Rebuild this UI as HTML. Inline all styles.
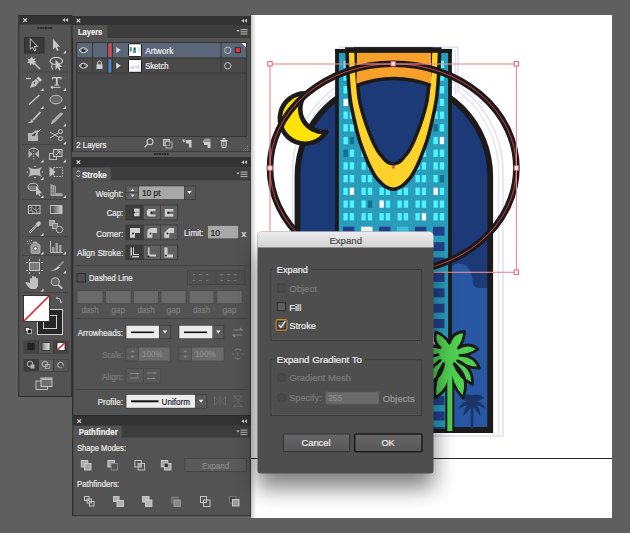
<!DOCTYPE html>
<html><head><meta charset="utf-8">
<style>
html,body{margin:0;padding:0}
body{width:630px;height:533px;background:#5f5f5f;position:relative;overflow:hidden;font-family:"Liberation Sans",sans-serif}
svg{position:absolute;left:0;top:0}
text{font-family:"Liberation Sans",sans-serif;transform:translate(0px,0.7px)}
</style></head>
<body>
<svg width="630" height="533" viewBox="0 0 630 533">
<!-- ARTBOARD -->
<defs>
<linearGradient id="abl" x1="0" x2="1"><stop offset="0" stop-color="#000" stop-opacity=".22"/><stop offset="1" stop-color="#000" stop-opacity="0"/></linearGradient>
<clipPath id="abclip"><rect x="251" y="15" width="361" height="503"/></clipPath>
<clipPath id="archclip"><path d="M300,432 V176 A94,94 0 0 1 488,176 V432Z"/></clipPath>
<clipPath id="towerclip"><rect x="339" y="52.5" width="109" height="376"/></clipPath>
</defs>
<rect x="251" y="15" width="361" height="503" fill="#fff"/>
<g id="art" clip-path="url(#abclip)">
<!-- sketch lavender lines -->
<g fill="none" stroke="#e0e0f6" stroke-width="1.5">
<path d="M339,47.2 H458 V92"/>
<path d="M455.5,50 V95"/>
<path d="M292.5,436 V172 A105.25,105.25 0 0 1 503,172 V436 H292.5"/>
<path d="M296.5,172 A101,101 0 0 1 498.5,172 V436" stroke="#e6e6f8"/>
</g>
<!-- navy arch -->
<path d="M297.5,430.7 V176 A96.5,96.5 0 0 1 490.5,176 V430.7Z" fill="#1d3a78"/>
<g clip-path="url(#archclip)">
<path d="M452,266 Q455,263 460,263.5 Q471,265 472.5,280 Q473,288 478,288 H490 V432 H452Z" fill="#2858a3"/>
</g>
<path d="M297.5,430 V176 A96.35,96.35 0 0 1 490.2,176 V430Z" fill="none" stroke="#1c1a1a" stroke-width="5.8"/>
<!-- moon -->
<path d="M306.4,93.3 A25.2,25.2 0 1 0 326.5,131.7 A23.0,23.0 0 0 1 306.4,93.3Z" fill="#ffe20a" stroke="#1c1a1a" stroke-width="4.6" stroke-linejoin="round"/>
<!-- tower -->
<rect x="337" y="50.8" width="113" height="379.5" fill="#2a9dbd" stroke="#1c1a1a" stroke-width="3.8"/>
<g clip-path="url(#towerclip)">
<g id="win" fill="#50f3ff">
<rect x="343.5" y="60.7" width="4.3" height="7.3"/>
<rect x="349.8" y="60.7" width="4.3" height="7.3"/>
<rect x="361.5" y="60.7" width="4.3" height="7.3"/>
<rect x="367.8" y="60.7" width="4.3" height="7.3"/>
<rect x="379.5" y="60.7" width="4.3" height="7.3"/>
<rect x="385.8" y="60.7" width="4.3" height="7.3"/>
<rect x="397.5" y="60.7" width="4.3" height="7.3"/>
<rect x="403.8" y="60.7" width="4.3" height="7.3"/>
<rect x="415.5" y="60.7" width="4.3" height="7.3"/>
<rect x="421.8" y="60.7" width="4.3" height="7.3"/>
<rect x="433.5" y="60.7" width="4.3" height="7.3"/>
<rect x="439.8" y="60.7" width="4.3" height="7.3"/>
<rect x="343.5" y="73.4" width="4.3" height="7.3"/>
<rect x="349.8" y="73.4" width="4.3" height="7.3"/>
<rect x="361.5" y="73.4" width="4.3" height="7.3"/>
<rect x="367.8" y="73.4" width="4.3" height="7.3"/>
<rect x="379.5" y="73.4" width="4.3" height="7.3"/>
<rect x="385.8" y="73.4" width="4.3" height="7.3"/>
<rect x="397.5" y="73.4" width="4.3" height="7.3"/>
<rect x="403.8" y="73.4" width="4.3" height="7.3"/>
<rect x="415.5" y="73.4" width="4.3" height="7.3"/>
<rect x="421.8" y="73.4" width="4.3" height="7.3"/>
<rect x="433.5" y="73.4" width="4.3" height="7.3"/>
<rect x="439.8" y="73.4" width="4.3" height="7.3"/>
<rect x="343.5" y="86.1" width="4.3" height="7.3"/>
<rect x="349.8" y="86.1" width="4.3" height="7.3"/>
<rect x="361.5" y="86.1" width="4.3" height="7.3"/>
<rect x="367.8" y="86.1" width="4.3" height="7.3"/>
<rect x="379.5" y="86.1" width="4.3" height="7.3"/>
<rect x="385.8" y="86.1" width="4.3" height="7.3"/>
<rect x="397.5" y="86.1" width="4.3" height="7.3"/>
<rect x="403.8" y="86.1" width="4.3" height="7.3"/>
<rect x="415.5" y="86.1" width="4.3" height="7.3"/>
<rect x="421.8" y="86.1" width="4.3" height="7.3"/>
<rect x="433.5" y="86.1" width="4.3" height="7.3"/>
<rect x="439.8" y="86.1" width="4.3" height="7.3"/>
<rect x="343.5" y="98.8" width="4.3" height="7.3" fill="#ffffff"/>
<rect x="349.8" y="98.8" width="4.3" height="7.3"/>
<rect x="361.5" y="98.8" width="4.3" height="7.3"/>
<rect x="367.8" y="98.8" width="4.3" height="7.3"/>
<rect x="379.5" y="98.8" width="4.3" height="7.3"/>
<rect x="385.8" y="98.8" width="4.3" height="7.3"/>
<rect x="397.5" y="98.8" width="4.3" height="7.3"/>
<rect x="403.8" y="98.8" width="4.3" height="7.3"/>
<rect x="415.5" y="98.8" width="4.3" height="7.3"/>
<rect x="421.8" y="98.8" width="4.3" height="7.3"/>
<rect x="433.5" y="98.8" width="4.3" height="7.3"/>
<rect x="439.8" y="98.8" width="4.3" height="7.3"/>
<rect x="343.5" y="111.5" width="4.3" height="7.3"/>
<rect x="349.8" y="111.5" width="4.3" height="7.3"/>
<rect x="361.5" y="111.5" width="4.3" height="7.3"/>
<rect x="367.8" y="111.5" width="4.3" height="7.3"/>
<rect x="379.5" y="111.5" width="4.3" height="7.3"/>
<rect x="385.8" y="111.5" width="4.3" height="7.3"/>
<rect x="397.5" y="111.5" width="4.3" height="7.3"/>
<rect x="403.8" y="111.5" width="4.3" height="7.3"/>
<rect x="415.5" y="111.5" width="4.3" height="7.3"/>
<rect x="421.8" y="111.5" width="4.3" height="7.3"/>
<rect x="433.5" y="111.5" width="4.3" height="7.3"/>
<rect x="439.8" y="111.5" width="4.3" height="7.3"/>
<rect x="343.5" y="124.2" width="4.3" height="7.3"/>
<rect x="349.8" y="124.2" width="4.3" height="7.3"/>
<rect x="361.5" y="124.2" width="4.3" height="7.3"/>
<rect x="367.8" y="124.2" width="4.3" height="7.3"/>
<rect x="379.5" y="124.2" width="4.3" height="7.3"/>
<rect x="385.8" y="124.2" width="4.3" height="7.3"/>
<rect x="397.5" y="124.2" width="4.3" height="7.3"/>
<rect x="403.8" y="124.2" width="4.3" height="7.3"/>
<rect x="415.5" y="124.2" width="4.3" height="7.3"/>
<rect x="421.8" y="124.2" width="4.3" height="7.3"/>
<rect x="433.5" y="124.2" width="4.3" height="7.3" fill="#166f8e"/>
<rect x="439.8" y="124.2" width="4.3" height="7.3"/>
<rect x="343.5" y="136.9" width="4.3" height="7.3"/>
<rect x="349.8" y="136.9" width="4.3" height="7.3" fill="#166f8e"/>
<rect x="361.5" y="136.9" width="4.3" height="7.3"/>
<rect x="367.8" y="136.9" width="4.3" height="7.3"/>
<rect x="379.5" y="136.9" width="4.3" height="7.3"/>
<rect x="385.8" y="136.9" width="4.3" height="7.3"/>
<rect x="397.5" y="136.9" width="4.3" height="7.3"/>
<rect x="403.8" y="136.9" width="4.3" height="7.3"/>
<rect x="415.5" y="136.9" width="4.3" height="7.3"/>
<rect x="421.8" y="136.9" width="4.3" height="7.3"/>
<rect x="433.5" y="136.9" width="4.3" height="7.3"/>
<rect x="439.8" y="136.9" width="4.3" height="7.3" fill="#ffffff"/>
<rect x="343.5" y="149.6" width="4.3" height="7.3" fill="#166f8e"/>
<rect x="349.8" y="149.6" width="4.3" height="7.3"/>
<rect x="361.5" y="149.6" width="4.3" height="7.3"/>
<rect x="367.8" y="149.6" width="4.3" height="7.3"/>
<rect x="379.5" y="149.6" width="4.3" height="7.3"/>
<rect x="385.8" y="149.6" width="4.3" height="7.3"/>
<rect x="397.5" y="149.6" width="4.3" height="7.3"/>
<rect x="403.8" y="149.6" width="4.3" height="7.3"/>
<rect x="415.5" y="149.6" width="4.3" height="7.3"/>
<rect x="421.8" y="149.6" width="4.3" height="7.3"/>
<rect x="433.5" y="149.6" width="4.3" height="7.3"/>
<rect x="439.8" y="149.6" width="4.3" height="7.3"/>
<rect x="343.5" y="162.3" width="4.3" height="7.3"/>
<rect x="349.8" y="162.3" width="4.3" height="7.3"/>
<rect x="361.5" y="162.3" width="4.3" height="7.3"/>
<rect x="367.8" y="162.3" width="4.3" height="7.3"/>
<rect x="379.5" y="162.3" width="4.3" height="7.3"/>
<rect x="385.8" y="162.3" width="4.3" height="7.3"/>
<rect x="397.5" y="162.3" width="4.3" height="7.3"/>
<rect x="403.8" y="162.3" width="4.3" height="7.3"/>
<rect x="415.5" y="162.3" width="4.3" height="7.3"/>
<rect x="421.8" y="162.3" width="4.3" height="7.3"/>
<rect x="433.5" y="162.3" width="4.3" height="7.3"/>
<rect x="439.8" y="162.3" width="4.3" height="7.3"/>
<rect x="343.5" y="175.0" width="4.3" height="7.3"/>
<rect x="349.8" y="175.0" width="4.3" height="7.3"/>
<rect x="361.5" y="175.0" width="4.3" height="7.3"/>
<rect x="367.8" y="175.0" width="4.3" height="7.3"/>
<rect x="379.5" y="175.0" width="4.3" height="7.3"/>
<rect x="385.8" y="175.0" width="4.3" height="7.3"/>
<rect x="397.5" y="175.0" width="4.3" height="7.3"/>
<rect x="403.8" y="175.0" width="4.3" height="7.3"/>
<rect x="415.5" y="175.0" width="4.3" height="7.3"/>
<rect x="421.8" y="175.0" width="4.3" height="7.3"/>
<rect x="433.5" y="175.0" width="4.3" height="7.3"/>
<rect x="439.8" y="175.0" width="4.3" height="7.3" fill="#166f8e"/>
<rect x="343.5" y="187.7" width="4.3" height="7.3"/>
<rect x="349.8" y="187.7" width="4.3" height="7.3" fill="#ffffff"/>
<rect x="361.5" y="187.7" width="4.3" height="7.3"/>
<rect x="367.8" y="187.7" width="4.3" height="7.3"/>
<rect x="379.5" y="187.7" width="4.3" height="7.3"/>
<rect x="385.8" y="187.7" width="4.3" height="7.3"/>
<rect x="397.5" y="187.7" width="4.3" height="7.3"/>
<rect x="403.8" y="187.7" width="4.3" height="7.3"/>
<rect x="415.5" y="187.7" width="4.3" height="7.3"/>
<rect x="421.8" y="187.7" width="4.3" height="7.3"/>
<rect x="433.5" y="187.7" width="4.3" height="7.3" fill="#ffffff"/>
<rect x="439.8" y="187.7" width="4.3" height="7.3"/>
<rect x="343.5" y="200.4" width="4.3" height="7.3"/>
<rect x="349.8" y="200.4" width="4.3" height="7.3"/>
<rect x="361.5" y="200.4" width="4.3" height="7.3"/>
<rect x="367.8" y="200.4" width="4.3" height="7.3" fill="#166f8e"/>
<rect x="379.5" y="200.4" width="4.3" height="7.3" fill="#ffffff"/>
<rect x="385.8" y="200.4" width="4.3" height="7.3"/>
<rect x="397.5" y="200.4" width="4.3" height="7.3"/>
<rect x="403.8" y="200.4" width="4.3" height="7.3"/>
<rect x="415.5" y="200.4" width="4.3" height="7.3"/>
<rect x="421.8" y="200.4" width="4.3" height="7.3"/>
<rect x="433.5" y="200.4" width="4.3" height="7.3"/>
<rect x="439.8" y="200.4" width="4.3" height="7.3"/>
<rect x="343.5" y="213.1" width="4.3" height="7.3"/>
<rect x="349.8" y="213.1" width="4.3" height="7.3"/>
<rect x="361.5" y="213.1" width="4.3" height="7.3"/>
<rect x="367.8" y="213.1" width="4.3" height="7.3"/>
<rect x="379.5" y="213.1" width="4.3" height="7.3"/>
<rect x="385.8" y="213.1" width="4.3" height="7.3"/>
<rect x="397.5" y="213.1" width="4.3" height="7.3"/>
<rect x="403.8" y="213.1" width="4.3" height="7.3"/>
<rect x="415.5" y="213.1" width="4.3" height="7.3"/>
<rect x="421.8" y="213.1" width="4.3" height="7.3" fill="#ffffff"/>
<rect x="433.5" y="213.1" width="4.3" height="7.3"/>
<rect x="439.8" y="213.1" width="4.3" height="7.3"/>
<rect x="343.0" y="226.7" width="11.5" height="9" fill="#22408a"/>
<rect x="361.0" y="226.7" width="11.5" height="9" fill="#f4f4f4"/>
<rect x="379.0" y="226.7" width="11.5" height="9" fill="#22408a"/>
<rect x="397.0" y="226.7" width="11.5" height="9" fill="#3cc0dd"/>
<rect x="415.0" y="226.7" width="11.5" height="9" fill="#22408a"/>
<rect x="433.0" y="226.7" width="11.5" height="9" fill="#22408a"/>
<rect x="343.0" y="242.1" width="11.5" height="9" fill="#22408a"/>
<rect x="361.0" y="242.1" width="11.5" height="9" fill="#22408a"/>
<rect x="379.0" y="242.1" width="11.5" height="9" fill="#22408a"/>
<rect x="397.0" y="242.1" width="11.5" height="9" fill="#22408a"/>
<rect x="415.0" y="242.1" width="11.5" height="9" fill="#22408a"/>
<rect x="433.0" y="242.1" width="11.5" height="9" fill="#22408a"/>
<rect x="343.0" y="257.5" width="11.5" height="9" fill="#22408a"/>
<rect x="361.0" y="257.5" width="11.5" height="9" fill="#22408a"/>
<rect x="379.0" y="257.5" width="11.5" height="9" fill="#22408a"/>
<rect x="397.0" y="257.5" width="11.5" height="9" fill="#22408a"/>
<rect x="415.0" y="257.5" width="11.5" height="9" fill="#22408a"/>
<rect x="433.0" y="257.5" width="11.5" height="9" fill="#22408a"/>
<rect x="343.0" y="272.9" width="11.5" height="9" fill="#22408a"/>
<rect x="361.0" y="272.9" width="11.5" height="9" fill="#22408a"/>
<rect x="379.0" y="272.9" width="11.5" height="9" fill="#22408a"/>
<rect x="397.0" y="272.9" width="11.5" height="9" fill="#22408a"/>
<rect x="415.0" y="272.9" width="11.5" height="9" fill="#22408a"/>
<rect x="433.0" y="272.9" width="11.5" height="9" fill="#22408a"/>
<rect x="343.0" y="288.3" width="11.5" height="9" fill="#22408a"/>
<rect x="361.0" y="288.3" width="11.5" height="9" fill="#22408a"/>
<rect x="379.0" y="288.3" width="11.5" height="9" fill="#22408a"/>
<rect x="397.0" y="288.3" width="11.5" height="9" fill="#22408a"/>
<rect x="415.0" y="288.3" width="11.5" height="9" fill="#22408a"/>
<rect x="433.0" y="288.3" width="11.5" height="9" fill="#22408a"/>
<rect x="343.0" y="303.7" width="11.5" height="9" fill="#22408a"/>
<rect x="361.0" y="303.7" width="11.5" height="9" fill="#22408a"/>
<rect x="379.0" y="303.7" width="11.5" height="9" fill="#22408a"/>
<rect x="397.0" y="303.7" width="11.5" height="9" fill="#22408a"/>
<rect x="415.0" y="303.7" width="11.5" height="9" fill="#22408a"/>
<rect x="433.0" y="303.7" width="11.5" height="9" fill="#22408a"/>
<rect x="343.0" y="319.1" width="11.5" height="9" fill="#22408a"/>
<rect x="361.0" y="319.1" width="11.5" height="9" fill="#22408a"/>
<rect x="379.0" y="319.1" width="11.5" height="9" fill="#22408a"/>
<rect x="397.0" y="319.1" width="11.5" height="9" fill="#22408a"/>
<rect x="415.0" y="319.1" width="11.5" height="9" fill="#22408a"/>
<rect x="433.0" y="319.1" width="11.5" height="9" fill="#22408a"/>
<rect x="343.0" y="334.5" width="11.5" height="9" fill="#22408a"/>
<rect x="361.0" y="334.5" width="11.5" height="9" fill="#22408a"/>
<rect x="379.0" y="334.5" width="11.5" height="9" fill="#22408a"/>
<rect x="397.0" y="334.5" width="11.5" height="9" fill="#22408a"/>
<rect x="415.0" y="334.5" width="11.5" height="9" fill="#22408a"/>
<rect x="433.0" y="334.5" width="11.5" height="9" fill="#ffffff"/>
<rect x="343.0" y="349.9" width="11.5" height="9" fill="#22408a"/>
<rect x="361.0" y="349.9" width="11.5" height="9" fill="#22408a"/>
<rect x="379.0" y="349.9" width="11.5" height="9" fill="#22408a"/>
<rect x="397.0" y="349.9" width="11.5" height="9" fill="#22408a"/>
<rect x="415.0" y="349.9" width="11.5" height="9" fill="#22408a"/>
<rect x="433.0" y="349.9" width="11.5" height="9" fill="#22408a"/>
<rect x="343.0" y="365.3" width="11.5" height="9" fill="#22408a"/>
<rect x="361.0" y="365.3" width="11.5" height="9" fill="#22408a"/>
<rect x="379.0" y="365.3" width="11.5" height="9" fill="#22408a"/>
<rect x="397.0" y="365.3" width="11.5" height="9" fill="#22408a"/>
<rect x="415.0" y="365.3" width="11.5" height="9" fill="#22408a"/>
<rect x="433.0" y="365.3" width="11.5" height="9" fill="#22408a"/>
<rect x="343.0" y="380.7" width="11.5" height="9" fill="#22408a"/>
<rect x="361.0" y="380.7" width="11.5" height="9" fill="#22408a"/>
<rect x="379.0" y="380.7" width="11.5" height="9" fill="#22408a"/>
<rect x="397.0" y="380.7" width="11.5" height="9" fill="#22408a"/>
<rect x="415.0" y="380.7" width="11.5" height="9" fill="#22408a"/>
<rect x="433.0" y="380.7" width="11.5" height="9" fill="#22408a"/>
<rect x="343.0" y="396.1" width="11.5" height="9" fill="#22408a"/>
<rect x="361.0" y="396.1" width="11.5" height="9" fill="#22408a"/>
<rect x="379.0" y="396.1" width="11.5" height="9" fill="#22408a"/>
<rect x="397.0" y="396.1" width="11.5" height="9" fill="#22408a"/>
<rect x="415.0" y="396.1" width="11.5" height="9" fill="#22408a"/>
<rect x="433.0" y="396.1" width="11.5" height="9" fill="#22408a"/>
<rect x="343.0" y="411.5" width="11.5" height="9" fill="#22408a"/>
<rect x="361.0" y="411.5" width="11.5" height="9" fill="#22408a"/>
<rect x="379.0" y="411.5" width="11.5" height="9" fill="#22408a"/>
<rect x="397.0" y="411.5" width="11.5" height="9" fill="#22408a"/>
<rect x="415.0" y="411.5" width="11.5" height="9" fill="#22408a"/>
<rect x="433.0" y="411.5" width="11.5" height="9" fill="#22408a"/>
<rect x="343.0" y="426.9" width="11.5" height="9" fill="#22408a"/>
<rect x="361.0" y="426.9" width="11.5" height="9" fill="#22408a"/>
<rect x="379.0" y="426.9" width="11.5" height="9" fill="#22408a"/>
<rect x="397.0" y="426.9" width="11.5" height="9" fill="#22408a"/>
<rect x="415.0" y="426.9" width="11.5" height="9" fill="#22408a"/>
<rect x="433.0" y="426.9" width="11.5" height="9" fill="#22408a"/>
</g>
</g>
<!-- palms -->
<path d="M472,428.5 V403" stroke="#1a3466" stroke-width="2.8"/>
<path d="M472,395 Q480.5,393 484,398 Q480.5,399.5 477.5,401.5 Q483.5,403 485.5,409 Q480.5,406 476.5,405 Q480.5,410 480.5,416 Q476,410.5 472.5,406 Q468,410.5 463.5,416 Q463.5,410 467.5,405 Q463.5,406 458.5,409 Q460.5,403 466.5,401.5 Q463.5,399.5 460,398 Q463.5,393 472,395Z" fill="#1a3466"/>
<path d="M449.8,430.5 V355" stroke="#1c1a1a" stroke-width="9"/>
<path d="M440.1,347.6 Q432.4,341.3 436.0,332.0 Q444.7,335.1 449.4,343.0 Q452.8,331.8 464.5,331.5 Q464.4,340.9 458.3,348.1 Q468.5,341.4 478.0,349.0 Q470.1,355.5 459.9,355.4 Q474.2,354.7 479.5,368.0 Q467.3,368.4 457.6,360.9 Q473.6,367.3 472.5,384.5 Q459.6,377.4 454.1,363.7 Q470.9,377.7 463.0,398.0 Q450.1,384.0 449.0,365.0 Q453.9,386.5 435.0,398.0 Q433.2,379.3 443.7,363.6 Q441.2,380.9 424.0,384.0 Q427.8,369.3 440.1,360.4 Q431.0,371.2 418.0,366.0 Q426.0,356.8 438.0,354.9 Q426.5,357.9 420.0,348.0 Q430.0,344.2 440.1,347.6Z" fill="#50cf50" stroke="#1c1a1a" stroke-width="2.8" stroke-linejoin="round"/>
<path d="M449.8,431 V356" stroke="#50cf50" stroke-width="5"/>
<!-- U arch -->
<path id="uo" d="M347.0,49.0 C347.2,53.3 347.4,66.5 348.0,75.0 C348.6,83.5 349.2,92.5 350.3,100.0 C351.4,107.5 352.8,113.3 354.3,120.0 C355.8,126.7 357.3,133.3 359.4,140.0 C361.5,146.7 364.9,155.0 366.9,160.0 C368.9,165.0 370.1,167.2 371.6,170.0 C373.1,172.8 374.2,174.9 375.8,177.1 C377.4,179.3 379.4,181.3 381.1,183.0 C382.8,184.7 384.1,185.9 386.1,187.0 C388.1,188.1 390.9,189.3 393.3,189.3 C395.7,189.3 398.5,188.1 400.5,187.0 C402.5,185.9 403.8,184.7 405.5,183.0 C407.2,181.3 409.2,179.3 410.8,177.1 C412.4,174.9 413.5,172.8 415.0,170.0 C416.5,167.2 417.7,165.0 419.7,160.0 C421.7,155.0 425.1,146.7 427.2,140.0 C429.3,133.3 430.8,126.7 432.3,120.0 C433.8,113.3 435.2,107.5 436.3,100.0 C437.4,92.5 438.1,83.5 438.6,75.0 C439.2,66.5 439.4,53.3 439.6,49.0Z" fill="#fdd22a" stroke="#1c1a1a" stroke-width="3.6"/>
<path id="ui" d="M356.0,49.0 C356.2,53.3 356.5,66.5 357.1,75.0 C357.7,83.5 358.2,92.5 359.5,100.0 C360.8,107.5 362.7,113.3 364.8,120.0 C366.9,126.7 370.2,135.0 372.3,140.0 C374.4,145.0 375.8,147.4 377.3,150.0 C378.8,152.6 380.2,154.0 381.5,155.7 C382.8,157.4 383.9,158.8 385.1,160.0 C386.3,161.2 387.1,161.9 388.5,162.6 C389.9,163.2 391.7,163.9 393.3,163.9 C394.9,163.9 396.7,163.2 398.1,162.6 C399.5,161.9 400.3,161.2 401.5,160.0 C402.7,158.8 403.8,157.4 405.1,155.7 C406.4,154.0 407.8,152.6 409.3,150.0 C410.8,147.4 412.2,145.0 414.3,140.0 C416.4,135.0 419.7,126.7 421.8,120.0 C423.9,113.3 425.8,107.5 427.1,100.0 C428.4,92.5 428.9,83.5 429.5,75.0 C430.1,66.5 430.4,53.3 430.6,49.0Z" fill="#1d3a78" stroke="#1c1a1a" stroke-width="3.6"/>
<path d="M357,52.5 H431 L431,85 Q394,71.5 356.5,85Z" fill="#f7a02a"/>
<path d="M356.8,85.5 Q394,71.5 430.8,85.5" fill="none" stroke="#1c1a1a" stroke-width="3.6"/>
<rect x="335.1" y="49" width="117" height="3.8" fill="#1c1a1a"/>
<!-- selected ellipse -->
<ellipse cx="393.2" cy="168" rx="123.2" ry="104.2" fill="none" stroke="#1c1a1a" stroke-width="6.6"/>
<ellipse cx="393.2" cy="168" rx="123.2" ry="104.2" fill="none" stroke="#e04448" stroke-width="0.9"/>
<rect x="270" y="64" width="246.4" height="208.3" fill="none" stroke="#f08a8e" stroke-width="1.1"/>
<g fill="#fff" stroke="#ef5a60" stroke-width="1">
<rect x="267.8" y="61.6" width="4.4" height="4.4"/>
<rect x="391.0" y="61.6" width="4.4" height="4.4"/>
<rect x="514.2" y="61.6" width="4.4" height="4.4"/>
<rect x="267.8" y="165.8" width="4.4" height="4.4"/>
<rect x="514.2" y="165.8" width="4.4" height="4.4"/>
<rect x="267.8" y="270.0" width="4.4" height="4.4"/>
<rect x="391.0" y="270.0" width="4.4" height="4.4"/>
<rect x="514.2" y="270.0" width="4.4" height="4.4"/>
</g>
<rect x="392.2" y="166" width="2.6" height="2.6" fill="#f0505a"/>
</g>
<rect x="251" y="458" width="361" height="1" fill="#2a2a2a"/>
<rect x="251" y="15" width="5" height="503" fill="url(#abl)"/>

<!-- ===== TOOLS PANEL ===== -->
<g id="tools">
<rect x="18.8" y="15.5" width="52.9" height="381" fill="#535353" stroke="#2c2c2c"/>
<rect x="19" y="16" width="53" height="8.5" fill="#333"/>
<path d="M23.3,18.3 l3.6,3.6 M26.9,18.3 l-3.6,3.6" stroke="#ddd" stroke-width="1.1"/>
<path d="M65,18 l-2.6,2 l2.6,2Z M68,18 l-2.6,2 l2.6,2Z" fill="#ccc"/>
<!-- grip -->
<g fill="#2c2c2c"><rect x="37.5" y="27" width="2" height="2"/><rect x="40" y="27" width="2" height="2"/><rect x="42.5" y="27" width="2" height="2"/><rect x="45" y="27" width="2" height="2"/><rect x="47.5" y="27" width="2" height="2"/><rect x="50" y="27" width="2" height="2"/></g>
<!-- separators -->
<g fill="#444">
<rect x="23" y="71.5" width="45" height="1"/>
<rect x="23" y="144" width="45" height="1"/>
<rect x="23" y="199" width="45" height="1"/>
<rect x="23" y="236" width="45" height="1"/>
<rect x="23" y="255" width="45" height="1"/>
<rect x="23" y="292" width="45" height="1"/>
</g>
<!-- selection highlight -->
<rect x="24.5" y="37.5" width="19.5" height="15.5" fill="#3a3a3a" stroke="#2e2e2e"/>
<!-- selection arrow outlined -->
<path d="M30.3,38.6 V49.3 l2.3,-2.2 l1.8,3.8 l1.6,-0.8 l-1.8,-3.6 h3.3Z" fill="#2a2a2a" stroke="#cfcfcf" stroke-width="0.9" stroke-linejoin="round"/>
<!-- direct select -->
<path d="M53,39 V49.5 l2.3,-2.2 l1.8,3.8 l1.6,-0.8 l-1.8,-3.6 h3.3Z" fill="#c8c8c8"/>
<g fill="#d8d8d8">
<path d="M66,50.5 v3 h-3Z"/>
<path d="M43.5,88 v3 h-3Z"/><path d="M66,88 v3 h-3Z"/>
<path d="M43.5,106 v3 h-3Z"/><path d="M66,106 v3 h-3Z"/>
<path d="M66,123.5 v3 h-3Z"/>
<path d="M66,141.5 v3 h-3Z"/>
<path d="M43.5,159.5 v3 h-3Z"/><path d="M66,159.5 v3 h-3Z"/>
<path d="M43.5,177 v3 h-3Z"/>
<path d="M43.5,195 v3 h-3Z"/><path d="M66,195 v3 h-3Z"/>
<path d="M43.5,233 v3 h-3Z"/>
<path d="M43.5,251.5 v3 h-3Z"/><path d="M66,251.5 v3 h-3Z"/>
<path d="M66,270.5 v3 h-3Z"/>
<path d="M43.5,288.5 v3 h-3Z"/>
</g>
<!-- magic wand -->
<path d="M32,56.5 l1,2.6 2.7,-0.8 -1.3,2.4 2.3,1.5 -2.7,0.5 0.3,2.7 -2.3,-1.6 -1.9,2 -0.4,-2.7 -2.8,-0.2 1.9,-2 -1.6,-2.2 2.7,0.4Z" fill="#c4c4c4"/>
<path d="M34,63 l6,6" stroke="#c4c4c4" stroke-width="1.6"/>
<!-- lasso -->
<ellipse cx="56.3" cy="61" rx="6.3" ry="3.6" fill="none" stroke="#c4c4c4" stroke-width="1.2"/>
<path d="M55.5,59.5 V69.5 l2.2,-2 l1.6,3 l1.4,-0.7 l-1.5,-2.9 h3Z" fill="#c8c8c8"/>
<path d="M52,64 q-1,3 1,5.5" stroke="#c4c4c4" fill="none" stroke-width="1.1"/>
<!-- pen -->
<path d="M26,78.5 h5" stroke="#cfcfcf" stroke-width="1.2"/>
<path d="M30,88 l2,-6 4,-3 3,3 -3,4Z" fill="#bdbdbd"/>
<path d="M36.5,78.5 l2,-2 3.5,3.5 -2,2Z" fill="#c8c8c8"/>
<circle cx="34.5" cy="83" r="0.8" fill="#333"/>
<!-- type -->
<path d="M52,77 h9.5 v2.6 h-0.9 v-1.4 h-3 v6.2 h1.3 v1 h-4.3 v-1 h1.3 v-6.2 h-3 v1.4 h-0.9Z" fill="#d0d0d0"/>
<path d="M51.5,87.3 h9" stroke="#d0d0d0" stroke-width="1"/><path d="M50.3,87.3 l2.4,-1.9 v3.8Z" fill="#d0d0d0"/>
<!-- line -->
<path d="M29,104.5 L39.5,95" stroke="#cfcfcf" stroke-width="1.1"/>
<!-- ellipse -->
<ellipse cx="56" cy="99.5" rx="6" ry="4.3" fill="#6a6a6a" stroke="#bdbdbd" stroke-width="1"/>
<!-- brush -->
<path d="M33,120 L40.5,112" stroke="#c8c8c8" stroke-width="1.8"/>
<path d="M27.5,122.5 q3,0 4,-3 l2,1.5 q-1,3 -6,1.5Z" fill="#c0c0c0"/>
<!-- pencil -->
<path d="M51.5,124 l1,-3 8,-8 q1.5,-0.5 2,1 l-8,8Z" fill="#a8a8a8" stroke="#c8c8c8" stroke-width="0.8"/>
<!-- blob / shaper -->
<path d="M28,133 h4 q3,-3 6,-3 v3 q-1,2 0,3 v5 h-10Z" fill="#b4b4b4"/>
<path d="M31.5,136 q2,-3 5,-3.5 l-2,3.5Z" fill="#404040"/>
<path d="M37,133 l4,-4" stroke="#c8c8c8" stroke-width="1"/>
<!-- scissors -->
<circle cx="60.5" cy="131.5" r="2" fill="none" stroke="#c8c8c8" stroke-width="1"/>
<circle cx="60.5" cy="138.5" r="2" fill="none" stroke="#c8c8c8" stroke-width="1"/>
<path d="M50,132 L58.8,137.3 M50,138 L58.8,132.7" stroke="#c8c8c8" stroke-width="1"/>
<!-- rotate/reflect -->
<path d="M28.5,150 v8 l4,-4Z M39,150 v8 l-4,-4Z" fill="#b8b8b8"/>
<path d="M33.7,148 v12" stroke="#c8c8c8" stroke-width="0.8" stroke-dasharray="1.5 1"/>
<path d="M29,150 q4.5,-4 9,0" fill="none" stroke="#c8c8c8" stroke-width="1"/>
<!-- scale -->
<rect x="49.5" y="153.5" width="7" height="6" fill="none" stroke="#bdbdbd"/>
<rect x="53.5" y="149.5" width="8.5" height="7" fill="#5e5e5e" stroke="#c4c4c4"/>
<path d="M56,155 l4,-4 M57,151 h3 v3" stroke="#cfcfcf" stroke-width="0.9" fill="none"/>
<!-- puppet/width -->
<path d="M28,167 q7,4 14,0 q-4,5 0,10 q-7,-4 -14,0 q4,-5 0,-10Z" fill="#bcbcbc"/>
<path d="M26.5,172 l1.5,-1.2 v2.4Z M43.5,172 l-1.5,-1.2 v2.4Z M35,165.5 l-1.2,1.5 h2.4Z M35,178.5 l-1.2,-1.5 h2.4Z" fill="#bcbcbc"/>
<!-- free transform -->
<path d="M49.5,166.5 V177 l6,-5Z" fill="#c4c4c4"/>
<rect x="53.5" y="167.5" width="9" height="9" fill="none" stroke="#c4c4c4" stroke-dasharray="1.6 1.2"/>
<!-- shape builder -->
<ellipse cx="33" cy="187" rx="5" ry="3.8" fill="none" stroke="#bcbcbc" stroke-width="1.1"/>
<path d="M28.5,187 h9 M29,189 h7" stroke="#bcbcbc" stroke-width="0.8"/>
<path d="M36,186 V195.5 l2,-1.8 l1.5,2.6 l1.2,-0.6 l-1.3,-2.5 h2.6Z" fill="#c4c4c4"/>
<!-- perspective grid -->
<path d="M50.5,184 V196 H63 L62,193 H56 V186Z" fill="#a8a8a8"/>
<path d="M52.5,185 V195 M54.5,185.5 V195 M50.5,190 H56 M50.5,193 H62" stroke="#6a6a6a" stroke-width="0.6"/>
<!-- mesh -->
<rect x="28.5" y="205.5" width="11.5" height="8" fill="#3e3e3e" stroke="#c4c4c4"/>
<path d="M29,208 q3,-2 5,1 t5,-1 M29,211 q3,-2 5,1 t5,-1 M32,206 q-2,4 1,7 M36,206 q-1,4 1,7" stroke="#c4c4c4" stroke-width="0.7" fill="none"/>
<!-- gradient -->
<defs><linearGradient id="gr1" x1="0" x2="1"><stop offset="0" stop-color="#3a3a3a"/><stop offset="1" stop-color="#d8d8d8"/></linearGradient>
<linearGradient id="gr2" x1="0" x2="1"><stop offset="0" stop-color="#888"/><stop offset="1" stop-color="#e8e8e8"/></linearGradient></defs>
<rect x="50.5" y="205.5" width="11.5" height="8" fill="url(#gr1)" stroke="#bdbdbd"/>
<!-- eyedropper -->
<path d="M29.5,232.5 l7,-7" stroke="#c8c8c8" stroke-width="2"/>
<path d="M29.5,232.5 l7,-7" stroke="#555" stroke-width="0.7"/>
<path d="M35.5,224 l2,-2 q2,-1.5 3,0 q1,1.5 -0.5,3 l-2,2Z" fill="#c4c4c4"/>
<!-- blend -->
<rect x="49.5" y="220.5" width="5" height="5" fill="#9a9a9a" stroke="#c4c4c4" stroke-width="0.8"/>
<rect x="52.5" y="223.5" width="5" height="5" fill="#7a7a7a" stroke="#c4c4c4" stroke-width="0.8"/>
<circle cx="59.5" cy="229.5" r="3.3" fill="#555" stroke="#c4c4c4" stroke-width="0.9"/>
<!-- symbol sprayer -->
<path d="M33,242 h4 v2 h1 q2,0 2,2 v6 q0,1.5 -1.5,1.5 h-6 q-1.5,0 -1.5,-1.5 v-6 q0,-2 2,-2 h1Z" fill="#9a9a9a" stroke="#c4c4c4" stroke-width="0.7"/>
<circle cx="35.5" cy="248.5" r="1.8" fill="#eee" stroke="#444" stroke-width="0.7"/>
<g fill="#bbb"><rect x="27" y="241" width="1" height="1"/><rect x="29" y="240.5" width="1" height="1"/><rect x="27.5" y="243" width="1" height="1"/><rect x="30" y="242.5" width="1" height="1"/><rect x="31" y="240" width="1" height="1"/></g>
<!-- column graph -->
<path d="M50.5,241 V252.5 H63" stroke="#c4c4c4" fill="none" stroke-width="0.9"/>
<rect x="52" y="247" width="2.4" height="5" fill="#a0a0a0"/><rect x="55.5" y="243" width="2.4" height="9" fill="#a0a0a0"/><rect x="59" y="245" width="2.4" height="7" fill="#a0a0a0"/>
<!-- artboard -->
<rect x="29.5" y="262.5" width="10" height="8" fill="#7a7a7a" stroke="#c4c4c4"/>
<path d="M26,262.5 h2 M41,262.5 h2 M26,270.5 h2 M41,270.5 h2 M29.5,259 v2 M39.5,259 v2 M29.5,272 v2 M39.5,272 v2" stroke="#c4c4c4"/>
<!-- slice/knife -->
<path d="M50,271 q5,-1 8,-5 l2,1.5 q-4,3.5 -10,3.5Z" fill="#c8c8c8"/>
<path d="M58.5,265.5 l4.5,-4.5 l1,1 l-4.5,4.5Z" fill="#a0a0a0"/>
<!-- hand -->
<path d="M30,283 v-4 q0,-1 1,-1 t1,1 v3 v-5 q0,-1 1,-1 t1,1 v5 v-4.5 q0,-1 1,-1 t1,1 v4.5 v-3 q0,-1 1,-1 t1,1 v6 q0,3 -3,4 h-4 q-2,-1 -3.5,-3 l-2,-3 q0,-1 1,-1Z" fill="#c0c0c0"/>
<!-- zoom -->
<circle cx="55.3" cy="281.8" r="4" fill="#6a6a6a" stroke="#bdbdbd" stroke-width="1.1"/>
<path d="M58.3,284.8 l4,3.8" stroke="#c4c4c4" stroke-width="1.8"/>
<!-- fill/stroke -->
<rect x="37" y="309" width="26" height="26" fill="#cfcfcf"/>
<rect x="38" y="310" width="24" height="24" fill="#262626"/>
<rect x="43.5" y="315.5" width="13" height="13" fill="none" stroke="#d0d0d0"/>
<rect x="23.5" y="295.5" width="26" height="26" fill="#fff" stroke="#333"/>
<path d="M24,321 L49,296" stroke="#e8141e" stroke-width="1.6"/>
<!-- swap -->
<path d="M57,298 q4,0 4,4" stroke="#c4c4c4" fill="none" stroke-width="0.9"/>
<path d="M55.5,298 l2,-1.5 v3Z M61,303.5 l-1.5,-2 h3Z" fill="#c4c4c4"/>
<!-- default -->
<rect x="25.5" y="327.5" width="4" height="4" fill="#fff" stroke="#222" stroke-width="0.8"/>
<rect x="27.5" y="329.5" width="4" height="4" fill="#222" stroke="#ccc" stroke-width="0.8"/>
<!-- color mode -->
<rect x="23.5" y="340.5" width="45" height="13" fill="#3a3a3a"/>
<rect x="24" y="341" width="14" height="12" fill="#444"/>
<rect x="39" y="341" width="14" height="12" fill="#555"/>
<rect x="54" y="341" width="14" height="12" fill="#444"/>
<rect x="27" y="342.5" width="8" height="8" fill="#222" stroke="#444" stroke-width="0.8"/>
<rect x="42" y="342.5" width="8" height="8" fill="url(#gr2)" stroke="#333" stroke-width="0.8"/>
<rect x="57" y="342.5" width="8" height="8" fill="#fff" stroke="#222" stroke-width="0.8"/>
<path d="M57.2,350.3 L64.8,342.7" stroke="#e8141e" stroke-width="1.4"/>
<!-- draw modes -->
<rect x="23.5" y="359" width="45" height="12.5" fill="#3a3a3a"/>
<rect x="24" y="359.5" width="14" height="11.5" fill="#3c3c3c"/>
<rect x="39" y="359.5" width="14" height="11.5" fill="#606060"/>
<rect x="54" y="359.5" width="14" height="11.5" fill="#555"/>
<circle cx="30" cy="364" r="2.8" fill="none" stroke="#c4c4c4" stroke-width="0.9"/>
<rect x="30.5" y="364.5" width="4" height="4" fill="#b0b0b0"/>
<circle cx="45" cy="364" r="2.8" fill="none" stroke="#c4c4c4" stroke-width="0.9"/>
<rect x="45.5" y="364.5" width="4" height="4" fill="none" stroke="#b0b0b0" stroke-width="0.8"/>
<circle cx="60.5" cy="365" r="2.8" fill="none" stroke="#c4c4c4" stroke-width="0.9"/>
<rect x="60.5" y="365" width="2.5" height="2.5" fill="#555"/>
<!-- screen mode -->
<rect x="36" y="381" width="11.5" height="8.5" fill="#5a5a5a" stroke="#c8c8c8" stroke-width="0.9"/>
<rect x="41" y="378" width="11" height="8.5" fill="#6e6e6e" stroke="#d0d0d0" stroke-width="0.9"/>
<rect x="41.5" y="378.5" width="10" height="1.5" fill="#bbb"/>
</g>

<!-- ===== LAYERS PANEL ===== -->
<g id="layers">
<rect x="72" y="16" width="179" height="141" fill="#535353"/>
<rect x="72" y="16" width="1.2" height="141" fill="#2c2c2c"/>
<rect x="250" y="16" width="1" height="141" fill="#3a3a3a"/>
<rect x="72" y="16" width="179" height="9" fill="#333"/>
<path d="M76.6,18.8 l3.6,3.6 M80.2,18.8 l-3.6,3.6" stroke="#ddd" stroke-width="1.1"/>
<path d="M244,18.8 l-2.6,2 l2.6,2Z M247,18.8 l-2.6,2 l2.6,2Z" fill="#ccc"/>
<rect x="72" y="25" width="179" height="13" fill="#3d3d3d"/>
<rect x="73" y="25" width="34.5" height="13" fill="#535353"/>
<text x="77.9" y="34.2" font-size="9.4" font-weight="bold" fill="#eee" textLength="24.4" lengthAdjust="spacingAndGlyphs" stroke="#eee" stroke-width="0.22">Layers</text>
<path d="M236.5,30 h3 l-1.5,2Z" fill="#ccc"/>
<rect x="240.5" y="29" width="7" height="1.2" fill="#aaa"/><rect x="240.5" y="31.2" width="7" height="1.2" fill="#aaa"/><rect x="240.5" y="33.4" width="7" height="1.2" fill="#aaa"/>
<!-- list -->
<rect x="76.5" y="42.5" width="170" height="94" fill="#494949" stroke="#363636"/>
<rect x="77" y="43" width="169" height="14.5" fill="#5b6679"/>
<rect x="77" y="57.5" width="169" height="1" fill="#383838"/>
<rect x="77" y="72.5" width="169" height="1" fill="#383838"/>
<rect x="92" y="43" width="1" height="30" fill="#383838"/>
<rect x="107" y="43" width="1" height="30" fill="#383838"/>
<rect x="112" y="43" width="1" height="30" fill="#383838"/>
<rect x="220.5" y="43" width="1" height="30" fill="#383838"/>
<rect x="108.5" y="44" width="2.6" height="13" fill="#e8413f"/>
<rect x="108.5" y="59.5" width="2.6" height="13" fill="#3d86d8"/>
<!-- eyes -->
<path d="M79,50.2 q4.5,-5.2 9,0 q-4.5,5.2 -9,0Z" fill="#8a8a8a" stroke="#d0d0d0" stroke-width="1"/>
<circle cx="83.5" cy="50.2" r="1.8" fill="#252525"/><circle cx="84.2" cy="49.5" r="0.5" fill="#ddd"/>
<path d="M79,65.7 q4.5,-5.2 9,0 q-4.5,5.2 -9,0Z" fill="#8a8a8a" stroke="#d0d0d0" stroke-width="1"/>
<circle cx="83.5" cy="65.7" r="1.8" fill="#252525"/><circle cx="84.2" cy="65" r="0.5" fill="#ddd"/>
<!-- lock -->
<path d="M97.7,64.5 v-1.6 q0,-2 1.8,-2 t1.8,2 v1.6" stroke="#ccc" stroke-width="1" fill="none"/>
<rect x="96.5" y="64.3" width="6" height="4.7" fill="#ccc"/>
<!-- arrows -->
<path d="M116.3,47 l4.3,3.1 l-4.3,3.1Z" fill="#e0e0e0"/>
<path d="M116.3,62.6 l4.3,3.1 l-4.3,3.1Z" fill="#e0e0e0"/>
<!-- thumbnails -->
<rect x="128.5" y="43.8" width="13" height="12.8" rx="1" fill="#fff" stroke="#1a1a1a"/>
<rect x="129.8" y="47" width="1.8" height="4" fill="#2f9fb0"/><rect x="129.8" y="49" width="1.6" height="2.5" fill="#3aa84a"/>
<rect x="133.5" y="47.5" width="2.2" height="5.5" fill="#2c4f90"/><rect x="133.5" y="50" width="2.2" height="2.5" fill="#2fb3c0"/>
<rect x="138.5" y="47" width="1.2" height="5" fill="#ccd"/>
<rect x="128.5" y="59.5" width="13" height="12.8" rx="1" fill="#fff" stroke="#1a1a1a"/>
<path d="M130,68 h2 M133,66 v3 M135,67 h2 M138,65 v4" stroke="#99a0e0" stroke-width="0.8"/>
<text x="145.2" y="53.3" font-size="9.4" fill="#eee" textLength="28.1" lengthAdjust="spacingAndGlyphs" stroke="#eee" stroke-width="0.22">Artwork</text>
<text x="145.2" y="68.6" font-size="9.4" fill="#eee" textLength="23.4" lengthAdjust="spacingAndGlyphs" stroke="#eee" stroke-width="0.22">Sketch</text>
<circle cx="227.8" cy="50.3" r="3.2" fill="none" stroke="#ccc" stroke-width="0.9"/>
<circle cx="227.8" cy="65.8" r="3.2" fill="none" stroke="#ccc" stroke-width="0.9"/>
<rect x="235.3" y="47.7" width="5" height="5" fill="#e8323a" stroke="#222" stroke-width="0.8"/>
<path d="M241.5,43 h4.5 v4.5Z" fill="#e8e8e8"/>
<!-- footer -->
<text x="76.3" y="147.1" font-size="9.4" fill="#eee" textLength="30" lengthAdjust="spacingAndGlyphs" stroke="#eee" stroke-width="0.22">2 Layers</text>
<circle cx="150" cy="141.8" r="3" fill="none" stroke="#ccc" stroke-width="1.1"/>
<path d="M147.8,144 l-3.2,3.2" stroke="#ccc" stroke-width="1.3"/>
<rect x="163.5" y="139.5" width="6" height="6" fill="#9a9a9a" stroke="#ccc" stroke-width="0.9"/>
<rect x="166" y="142" width="6" height="6" fill="none" stroke="#bbb" stroke-width="0.9"/>
<rect x="166" y="142" width="3.5" height="3.5" fill="#555"/>
<path d="M182,140 h3 M183.5,140 v2 l2,-1" stroke="#ccc" stroke-width="0.9" fill="none"/>
<path d="M186,140 h5.5 v7.5 h-2.5 v-4 h-3Z" fill="#ccc"/>
<path d="M202.5,141.5 h8 v6.5 h-3 v-3 h-3.5 v-1.5Z" fill="#ccc"/>
<path d="M202.5,141 l2.8,-2.5 h5.2 v2.5Z" fill="#999"/>
<path d="M220.5,140.5 h7 M223,140 v-1.5 h2 v1.5" stroke="#ccc" stroke-width="1" fill="none"/>
<path d="M221.5,141.5 h5 l-0.6,6 h-3.8Z" fill="none" stroke="#ccc" stroke-width="1"/>
<path d="M223.5,142.5 v4 M225,142.5 v4" stroke="#ccc" stroke-width="0.6"/>
<g fill="#777"><rect x="247" y="146" width="1" height="1"/><rect x="245" y="148" width="1" height="1"/><rect x="247" y="148" width="1" height="1"/><rect x="243" y="150" width="1" height="1"/><rect x="245" y="150" width="1" height="1"/><rect x="247" y="150" width="1" height="1"/></g>
<rect x="72" y="151" width="179" height="6" fill="#575757"/>
<rect x="72" y="151" width="179" height="1" fill="#3e3e3e"/>
<g fill="#2a2a2a"><rect x="154" y="153" width="2" height="2"/><rect x="156.5" y="153" width="2" height="2"/><rect x="159" y="153" width="2" height="2"/><rect x="161.5" y="153" width="2" height="2"/><rect x="164" y="153" width="2" height="2"/><rect x="166.5" y="153" width="2" height="2"/></g>
</g>

<!-- ===== STROKE PANEL ===== -->
<g id="stroke">
<rect x="72" y="157" width="179" height="258" fill="#535353"/>
<rect x="72" y="157" width="1.2" height="258" fill="#2c2c2c"/>
<rect x="250" y="157" width="1" height="258" fill="#3a3a3a"/>
<rect x="72" y="157" width="179" height="10.5" fill="#333"/>
<path d="M76.6,160.3 l3.6,3.6 M80.2,160.3 l-3.6,3.6" stroke="#ddd" stroke-width="1.1"/>
<path d="M244,160.3 l-2.6,2 l2.6,2Z M247,160.3 l-2.6,2 l2.6,2Z" fill="#ccc"/>
<rect x="72" y="167.5" width="179" height="13" fill="#3d3d3d"/>
<rect x="73" y="167.5" width="38" height="13" fill="#535353"/>
<path d="M76.5,172.5 l1.8,-2 l1.8,2 M76.5,175 l1.8,2 l1.8,-2" stroke="#ddd" stroke-width="0.9" fill="none"/>
<text x="82" y="177" font-size="9.4" font-weight="bold" fill="#eee" textLength="24.8" lengthAdjust="spacingAndGlyphs" stroke="#eee" stroke-width="0.22">Stroke</text>
<path d="M236.5,172.5 h3 l-1.5,2Z" fill="#ccc"/>
<rect x="240.5" y="171.5" width="7" height="1.2" fill="#aaa"/><rect x="240.5" y="173.7" width="7" height="1.2" fill="#aaa"/><rect x="240.5" y="175.9" width="7" height="1.2" fill="#aaa"/>
<!-- labels -->
<g font-size="9.4" fill="#e8e8e8" text-anchor="end" stroke="#e8e8e8" stroke-width="0.22">
<text x="123.2" y="196.2" textLength="27.5" lengthAdjust="spacingAndGlyphs">Weight:</text>
<text x="123.2" y="215.7" textLength="16.5" lengthAdjust="spacingAndGlyphs">Cap:</text>
<text x="123.2" y="236" textLength="27" lengthAdjust="spacingAndGlyphs">Corner:</text>
<text x="123.2" y="255.5" textLength="46.2" lengthAdjust="spacingAndGlyphs">Align Stroke:</text>
<text x="123" y="335.2" textLength="45.3" lengthAdjust="spacingAndGlyphs">Arrowheads:</text>
<text x="123" y="357.5" textLength="20.6" lengthAdjust="spacingAndGlyphs" fill="#7c7c7c" stroke="#7c7c7c" stroke-width="0.22">Scale:</text>
<text x="123" y="379.2" textLength="21.1" lengthAdjust="spacingAndGlyphs" fill="#7c7c7c" stroke="#7c7c7c" stroke-width="0.22">Align:</text>
<text x="123" y="404.5" textLength="25.3" lengthAdjust="spacingAndGlyphs">Profile:</text>
</g>
<!-- weight -->
<rect x="125.5" y="185.5" width="70.5" height="14.5" fill="#3a3a3a"/>
<rect x="126.4" y="186.3" width="12" height="6" fill="#626262"/>
<rect x="126.4" y="193" width="12" height="6.2" fill="#626262"/>
<path d="M130.3,191 l2.1,-2.3 l2.1,2.3Z M130.3,194.6 l2.1,2.3 l2.1,-2.3Z" fill="#ddd"/>
<rect x="139" y="186.3" width="45" height="12.9" fill="#a8a8a8"/>
<text x="141.9" y="195.4" font-size="9.4" fill="#1e1e1e" textLength="18.7" lengthAdjust="spacingAndGlyphs" stroke="#1e1e1e" stroke-width="0.22">10 pt</text>
<rect x="184.6" y="186.3" width="10.7" height="12.9" fill="#595959"/>
<path d="M187.2,191 h4.6 l-2.3,3Z" fill="#eee"/>
<!-- cap / corner / align groups -->
<g>
<rect x="125.5" y="204.7" width="52.2" height="15.6" fill="#383838"/>
<rect x="126.3" y="205.5" width="16.7" height="14" fill="#3c3c3c"/>
<rect x="143.7" y="205.5" width="16.4" height="14" fill="#606060"/>
<rect x="160.8" y="205.5" width="16.2" height="14" fill="#606060"/>
<rect x="125.5" y="224.6" width="52.2" height="15.6" fill="#383838"/>
<rect x="126.3" y="225.4" width="16.7" height="14" fill="#3c3c3c"/>
<rect x="143.7" y="225.4" width="16.4" height="14" fill="#606060"/>
<rect x="160.8" y="225.4" width="16.2" height="14" fill="#606060"/>
<rect x="125.5" y="244.7" width="52.2" height="15.2" fill="#383838"/>
<rect x="126.3" y="245.5" width="16.7" height="13.6" fill="#3c3c3c"/>
<rect x="143.7" y="245.5" width="16.4" height="13.6" fill="#606060"/>
<rect x="160.8" y="245.5" width="16.2" height="13.6" fill="#606060"/>
</g>
<g fill="#cfcfcf">
<!-- cap icons -->
<rect x="134" y="208.6" width="5.5" height="7.6"/>
<rect x="134" y="211.8" width="5.5" height="1" fill="#8a8a8a"/>
<path d="M149,209 h6.5 v2.2 h-5 v3.2 h5 v2.2 h-6.5 q-2.2,-0.2 -2.2,-3.8 q0,-3.6 2.2,-3.8Z"/>
<rect x="164.8" y="209" width="8.5" height="7.6"/>
<rect x="166.8" y="211.6" width="6.5" height="2.2" fill="#606060"/>
<!-- corner icons -->
<path d="M130,228 h10 v5 h-5 v4.8 h-5Z"/>
<path d="M147.3,237.8 v-5 q0,-4.8 4.8,-4.8 h5 v5 h-4.8 v4.8Z"/>
<path d="M164.3,237.8 v-5 l4.8,-4.8 h5 v5 h-4.8 v4.8Z"/>
<!-- align icons -->
<path d="M130.5,247.5 h1.5 v8.5 h7 v1.6 h-8.5Z"/>
<path d="M133,247.5 h1 v6.5 h5 v1 h-6Z"/>
<path d="M148,247.5 h1.5 v7 h6.5 v2 h-8Z"/>
<path d="M164.5,247.5 h3 v7 h5.5 v3 h-8.5Z"/>
</g>
<g fill="#151515">
<circle cx="134" cy="212.5" r="0.9"/><circle cx="151.5" cy="212.7" r="0.9"/><circle cx="168.5" cy="212.7" r="0.9"/>
<circle cx="133" cy="233.5" r="0.9"/><circle cx="150.5" cy="233.5" r="0.9"/><circle cx="167.5" cy="233.5" r="0.9"/>
<circle cx="131.5" cy="256.5" r="0.9"/><circle cx="148.7" cy="256.5" r="0.9"/><circle cx="166" cy="255.5" r="0.9"/>
</g>
<!-- limit -->
<text x="184" y="235.8" font-size="9.4" fill="#e8e8e8" textLength="19.6" lengthAdjust="spacingAndGlyphs" stroke="#e8e8e8" stroke-width="0.22">Limit:</text>
<rect x="207" y="225" width="32" height="14.2" fill="#3a3a3a"/>
<rect x="207.7" y="225.7" width="30.6" height="12.8" fill="#a8a8a8"/>
<text x="210.5" y="235" font-size="9.4" fill="#1e1e1e" textLength="9.6" lengthAdjust="spacingAndGlyphs" stroke="#1e1e1e" stroke-width="0.22">10</text>
<text x="241.5" y="236" font-size="9.4" fill="#e8e8e8" stroke="#e8e8e8" stroke-width="0.22">x</text>
<!-- separators -->
<rect x="76" y="265" width="171" height="1" fill="#444"/>
<rect x="76" y="318" width="171" height="1" fill="#444"/>
<rect x="76" y="389" width="171" height="1" fill="#444"/>
<!-- dashed -->
<rect x="77" y="273.5" width="8.5" height="8.5" fill="#4e4e4e" stroke="#2e2e2e"/>
<text x="89" y="280.4" font-size="9.4" fill="#e8e8e8" textLength="43.7" lengthAdjust="spacingAndGlyphs" stroke="#e8e8e8" stroke-width="0.22">Dashed Line</text>
<rect x="187.5" y="270.5" width="57.5" height="14" fill="#505050" stroke="#464646"/>
<rect x="215.7" y="271" width="1" height="13" fill="#464646"/>
<path d="M193,275.5 v-1 h2 M199,274.5 h3 M206,274.5 h2 v1 M193,279.5 v1 h2 M199,280.5 h3 M206,280.5 h2 v-1" stroke="#7c7c7c" fill="none" stroke-width="0.9"/>
<path d="M221,275.5 v-1 h2 M227,274.5 h3 M234,274.5 h2 v1 M221,279.5 v1 h2 M227,280.5 h3 M234,280.5 h2 v-1" stroke="#7c7c7c" fill="none" stroke-width="0.9"/>
<g fill="#6a6a6a" stroke="#4a4a4a" stroke-width="0.8">
<rect x="77" y="290.7" width="26" height="13"/><rect x="105.5" y="290.7" width="25.5" height="13"/>
<rect x="133.5" y="290.7" width="25" height="13"/><rect x="161" y="290.7" width="25" height="13"/>
<rect x="189" y="290.7" width="25" height="13"/><rect x="216.8" y="290.7" width="25.5" height="13"/>
</g>
<g font-size="9.4" fill="#7e7e7e" text-anchor="middle" stroke="#7e7e7e" stroke-width="0.22">
<text x="90" y="312" textLength="17" lengthAdjust="spacingAndGlyphs">dash</text>
<text x="118.2" y="312" textLength="14" lengthAdjust="spacingAndGlyphs">gap</text>
<text x="146" y="312" textLength="17" lengthAdjust="spacingAndGlyphs">dash</text>
<text x="173.5" y="312" textLength="14" lengthAdjust="spacingAndGlyphs">gap</text>
<text x="201.5" y="312" textLength="17" lengthAdjust="spacingAndGlyphs">dash</text>
<text x="229.5" y="312" textLength="14" lengthAdjust="spacingAndGlyphs">gap</text>
</g>
<!-- arrowheads -->
<rect x="125.6" y="325" width="45.5" height="14" fill="#3a3a3a"/>
<rect x="126.4" y="325.7" width="32.6" height="12.6" fill="#ececec"/>
<rect x="131" y="331.5" width="23" height="1.6" fill="#111"/>
<rect x="159.6" y="325.7" width="10.8" height="12.6" fill="#5a5a5a"/>
<path d="M162.7,330.5 h4.6 l-2.3,3Z" fill="#eee"/>
<rect x="178.5" y="325" width="45.8" height="14" fill="#3a3a3a"/>
<rect x="179.3" y="325.7" width="33.1" height="12.6" fill="#ececec"/>
<rect x="184" y="331.5" width="23" height="1.6" fill="#111"/>
<rect x="213" y="325.7" width="10.6" height="12.6" fill="#5a5a5a"/>
<path d="M216,330.5 h4.6 l-2.3,3Z" fill="#eee"/>
<path d="M233,330 h9 l-2,-2 M242,335 h-9 l2,2" stroke="#8a8a8a" stroke-width="1.1" fill="none"/>
<!-- scale -->
<rect x="125.6" y="346.7" width="44.8" height="14.6" fill="#464646"/>
<rect x="126.4" y="347.4" width="12" height="6.3" fill="#5e5e5e"/><rect x="126.4" y="354.3" width="12" height="6.3" fill="#5e5e5e"/>
<path d="M130.4,352.3 l2,-2.2 l2,2.2Z M130.4,355.7 l2,2.2 l2,-2.2Z" fill="#8a8a8a"/>
<rect x="139" y="347.4" width="30.7" height="13.3" fill="#6c6c6c"/>
<text x="142.3" y="356.8" font-size="9.4" fill="#8e8e8e" textLength="20.3" lengthAdjust="spacingAndGlyphs" stroke="#8e8e8e" stroke-width="0.22">100%</text>
<rect x="178.5" y="346.7" width="45.8" height="14.6" fill="#464646"/>
<rect x="179.3" y="347.4" width="12" height="6.3" fill="#5e5e5e"/><rect x="179.3" y="354.3" width="12" height="6.3" fill="#5e5e5e"/>
<path d="M183.3,352.3 l2,-2.2 l2,2.2Z M183.3,355.7 l2,2.2 l2,-2.2Z" fill="#8a8a8a"/>
<rect x="191.9" y="347.4" width="31.7" height="13.3" fill="#6c6c6c"/>
<text x="195.2" y="356.8" font-size="9.4" fill="#8e8e8e" textLength="20.3" lengthAdjust="spacingAndGlyphs" stroke="#8e8e8e" stroke-width="0.22">100%</text>
<path d="M235,351 v-0.5 q0,-1.5 2.8,-1.5 t2.8,1.5 v0.5 M235,357 v0.5 q0,1.5 2.8,1.5 t2.8,-1.5 v-0.5 M237.8,352.5 v3 M232,354 h2 M241.5,354 h2" stroke="#7e7e7e" stroke-width="1" fill="none"/>
<!-- align -->
<rect x="125.6" y="368" width="35.5" height="15.5" fill="#464646"/>
<rect x="126.4" y="368.8" width="16.6" height="14" fill="#585858"/>
<rect x="143.7" y="368.8" width="16.8" height="14" fill="#585858"/>
<path d="M130,373.5 h5 M130,378 h9 l-2,-1.8 M135,373.5 h4 l-2,1.8" stroke="#8a8a8a" fill="none" stroke-width="0.9"/>
<path d="M147,373 h9.5 M147,378.5 h8 l-2,-1.8 M154,373.5 v-1.5" stroke="#8a8a8a" fill="none" stroke-width="0.9"/>
<!-- profile -->
<rect x="125.6" y="394" width="81.5" height="14.6" fill="#3a3a3a"/>
<rect x="126.4" y="394.8" width="68.7" height="13" fill="#ececec"/>
<rect x="131" y="400.3" width="27.5" height="2" fill="#111"/>
<text x="161.6" y="404.3" font-size="9.4" fill="#1c2233" textLength="28.4" lengthAdjust="spacingAndGlyphs" stroke="#1c2233" stroke-width="0.22">Uniform</text>
<rect x="195.7" y="394.8" width="10.7" height="13" fill="#5a5a5a"/>
<path d="M198.7,399.7 h4.6 l-2.3,3Z" fill="#eee"/>
<path d="M214.5,396.5 v9 l4,-4.5Z M225.5,396.5 v9 l-4,-4.5Z" fill="none" stroke="#6a6a6a" stroke-width="0.9"/>
<path d="M220,395.5 v11" stroke="#6a6a6a" stroke-width="0.8"/>
<path d="M233.5,396 h9 l-4.5,4Z M233.5,406.5 h9 l-4.5,-4Z" fill="none" stroke="#6a6a6a" stroke-width="0.9"/>
<path d="M233,401.2 h10" stroke="#6a6a6a" stroke-width="0.8"/>
</g>

<!-- ===== PATHFINDER PANEL ===== -->
<g id="pathfinder">
<rect x="72" y="415" width="179" height="100.5" fill="#535353"/>
<rect x="72" y="415" width="1.2" height="100.5" fill="#2c2c2c"/>
<rect x="250" y="415" width="1" height="100.5" fill="#3a3a3a"/>
<rect x="72" y="415" width="179" height="1" fill="#2a2a2a"/>
<rect x="72" y="416" width="179" height="9.8" fill="#333"/>
<path d="M77.4,419.3 l3.6,3.6 M81,419.3 l-3.6,3.6" stroke="#ddd" stroke-width="1.1"/>
<path d="M244,419.3 l-2.6,2 l2.6,2Z M247,419.3 l-2.6,2 l2.6,2Z" fill="#ccc"/>
<rect x="72" y="425.8" width="179" height="11.7" fill="#3d3d3d"/>
<rect x="73.5" y="425.8" width="48.2" height="11.7" fill="#535353"/>
<text x="78.8" y="434.2" font-size="9.4" font-weight="bold" fill="#eee" textLength="39" lengthAdjust="spacingAndGlyphs" stroke="#eee" stroke-width="0.22">Pathfinder</text>
<path d="M236.5,430.5 h3 l-1.5,2Z" fill="#ccc"/>
<rect x="240.5" y="429.5" width="7" height="1.2" fill="#aaa"/><rect x="240.5" y="431.7" width="7" height="1.2" fill="#aaa"/><rect x="240.5" y="433.9" width="7" height="1.2" fill="#aaa"/>
<text x="77" y="450.8" font-size="9.4" fill="#e8e8e8" textLength="49" lengthAdjust="spacingAndGlyphs" stroke="#e8e8e8" stroke-width="0.22">Shape Modes:</text>
<text x="77" y="486.8" font-size="9.4" fill="#e8e8e8" textLength="42.3" lengthAdjust="spacingAndGlyphs" stroke="#e8e8e8" stroke-width="0.22">Pathfinders:</text>
<!-- shape modes -->
<g stroke="#d0d0d0" stroke-width="0.9">
<rect x="81.3" y="460.5" width="6.5" height="6.5" fill="#a8a8a8"/>
<rect x="84.5" y="463.5" width="6.5" height="6.5" fill="#a8a8a8"/>
<rect x="107.9" y="460.5" width="6.5" height="6.5" fill="#a8a8a8"/>
<rect x="111.1" y="463.5" width="6.5" height="6.5" fill="#535353" stroke="#8a8a8a"/>
<rect x="134.9" y="460.5" width="6.5" height="6.5" fill="none"/>
<rect x="138.1" y="463.5" width="6.5" height="6.5" fill="none"/>
<rect x="138.1" y="463.5" width="3.3" height="3.5" fill="#a8a8a8" stroke="none"/>
<rect x="161.3" y="460.5" width="6.5" height="6.5" fill="#a8a8a8"/>
<rect x="164.5" y="463.5" width="6.5" height="6.5" fill="#a8a8a8"/>
<rect x="164.5" y="463.5" width="3.3" height="3.5" fill="#333" stroke="none"/>
</g>
<rect x="184.9" y="458.4" width="61.4" height="13.2" fill="#5a5a5a" stroke="#444" stroke-width="0.9"/>
<text x="215.6" y="468.2" font-size="9.4" fill="#8a8a8a" text-anchor="middle" textLength="27" lengthAdjust="spacingAndGlyphs" stroke="#8a8a8a" stroke-width="0.22">Expand</text>
<!-- pathfinders -->
<g stroke="#cfcfcf" stroke-width="0.9" fill="none">
<rect x="84.5" y="496.5" width="4.5" height="4"/><rect x="87" y="499" width="4.5" height="4"/><rect x="89.5" y="501.5" width="4.5" height="4.5"/>
<rect x="113.5" y="496.5" width="5.5" height="5" fill="#b0b0b0"/><rect x="117" y="500.5" width="6.5" height="6" fill="#b0b0b0"/>
<rect x="142.5" y="496.5" width="6.5" height="5.5" fill="#b8b8b8"/><rect x="145.5" y="500" width="6.5" height="6.5" fill="#b8b8b8"/>
<rect x="171.5" y="497" width="6.5" height="6" fill="#6a6a6a" stroke="#7a7a7a"/><rect x="174" y="500" width="6.5" height="6.5" fill="#8a8a8a" stroke="#999"/>
<rect x="200.5" y="496.5" width="6" height="6"/><rect x="203.5" y="500" width="6.5" height="6.5"/>
<rect x="229.5" y="496.5" width="6.5" height="6.5" fill="#444" stroke="#777"/><rect x="232.5" y="499.5" width="6.5" height="6.5" fill="#9a9a9a"/>
</g>
<rect x="72" y="515" width="179" height="0.8" fill="#2c2c2c"/>
</g>

<!-- ===== DIALOG ===== -->
<g id="dialog">
<defs>
<filter id="sh" x="-40%" y="-40%" width="180%" height="180%"><feGaussianBlur stdDeviation="11"/></filter>
<linearGradient id="ttl" x1="0" y1="0" x2="0" y2="1"><stop offset="0" stop-color="#ededed"/><stop offset="1" stop-color="#d3d3d3"/></linearGradient>
<linearGradient id="bt" x1="0" y1="0" x2="0" y2="1"><stop offset="0" stop-color="#666"/><stop offset="1" stop-color="#575757"/></linearGradient>
</defs>
<rect x="257" y="252" width="177" height="236" rx="6" fill="#000" opacity=".5" filter="url(#sh)"/>
<path d="M257.5,236 a4.5,4.5 0 0 1 4.5,-4.5 h167 a4.5,4.5 0 0 1 4.5,4.5 V470.5 a3,3 0 0 1 -3,3 H260.5 a3,3 0 0 1 -3,-3Z" fill="#4e4e4e"/>
<path d="M257.5,236 a4.5,4.5 0 0 1 4.5,-4.5 h167 a4.5,4.5 0 0 1 4.5,4.5 V247.5 H257.5Z" fill="url(#ttl)"/>
<rect x="257.5" y="247.3" width="176" height="0.7" fill="#8a8a8a"/>
<text x="329.4" y="242.9" font-size="9.6" fill="#4a4a4a" textLength="32.6" lengthAdjust="spacingAndGlyphs" stroke="#4a4a4a" stroke-width="0.22">Expand</text>
<!-- group 1 -->
<path d="M274.5,269.5 H271 V340.5 H421.5 V269.5 H311.5" fill="none" stroke="#3a3a3a" stroke-width="1"/>
<path d="M272,270.5 V339.5 H420.5" fill="none" stroke="#5a5a5a" stroke-width="0.6"/>
<text x="276.8" y="272.8" font-size="9.6" fill="#eaeaea" textLength="31.2" lengthAdjust="spacingAndGlyphs" stroke="#eaeaea" stroke-width="0.22">Expand</text>
<rect x="277.5" y="284" width="8" height="8" fill="#4a4a4a" stroke="#434343"/>
<text x="289.3" y="291.3" font-size="9.6" fill="#7b7b7b" textLength="27.5" lengthAdjust="spacingAndGlyphs" stroke="#7b7b7b" stroke-width="0.22">Object</text>
<rect x="277.5" y="302.7" width="8" height="8" fill="#5e5e5e" stroke="#2e2e2e"/>
<text x="289.3" y="310" font-size="9.6" fill="#eaeaea" textLength="12" lengthAdjust="spacingAndGlyphs" stroke="#eaeaea" stroke-width="0.22">Fill</text>
<rect x="276" y="319.6" width="11" height="10.7" rx="1.5" fill="none" stroke="#c7862e" stroke-width="1.1"/>
<rect x="277.8" y="321.4" width="7.5" height="7.2" fill="#5e5e5e" stroke="#2e2e2e" stroke-width="0.8"/>
<path d="M278.8,325 l2,2.6 l4.5,-6.5" stroke="#f2f2f2" stroke-width="1.2" fill="none"/>
<text x="289.3" y="328.5" font-size="9.6" fill="#eaeaea" textLength="26.7" lengthAdjust="spacingAndGlyphs" stroke="#eaeaea" stroke-width="0.22">Stroke</text>
<!-- group 2 -->
<path d="M274.5,359.7 H271 V415.5 H421.5 V359.7 H365" fill="none" stroke="#3a3a3a" stroke-width="1"/>
<path d="M272,360.7 V414.5 H420.5" fill="none" stroke="#5a5a5a" stroke-width="0.6"/>
<text x="276.7" y="362.7" font-size="9.6" fill="#eaeaea" textLength="85.3" lengthAdjust="spacingAndGlyphs" stroke="#eaeaea" stroke-width="0.22">Expand Gradient To</text>
<circle cx="281.7" cy="377.4" r="4" fill="#4a4a4a" stroke="#434343"/>
<text x="289.4" y="380.5" font-size="9.6" fill="#7b7b7b" textLength="61.6" lengthAdjust="spacingAndGlyphs" stroke="#7b7b7b" stroke-width="0.22">Gradient Mesh</text>
<circle cx="281.7" cy="397.5" r="4" fill="#4a4a4a" stroke="#434343"/>
<text x="289.4" y="400.8" font-size="9.6" fill="#7b7b7b" textLength="32" lengthAdjust="spacingAndGlyphs" stroke="#7b7b7b" stroke-width="0.22">Specify:</text>
<rect x="325.7" y="391.9" width="53.3" height="12.2" fill="#6a6a6a" stroke="#5a5a5a" stroke-width="0.8"/>
<text x="328.2" y="400.8" font-size="9.6" fill="#8c8c8c" textLength="14" lengthAdjust="spacingAndGlyphs" stroke="#8c8c8c" stroke-width="0.22">255</text>
<text x="382.8" y="401" font-size="9.6" fill="#9a9a9a" textLength="31.8" lengthAdjust="spacingAndGlyphs" stroke="#9a9a9a" stroke-width="0.22">Objects</text>
<!-- buttons -->
<rect x="283.3" y="434" width="66.3" height="17.7" rx="1" fill="url(#bt)" stroke="#2c2c2c" stroke-width="0.9"/>
<text x="301.4" y="445.8" font-size="9.6" fill="#eaeaea" textLength="29.2" lengthAdjust="spacingAndGlyphs" stroke="#eaeaea" stroke-width="0.22">Cancel</text>
<rect x="354.7" y="434" width="67.3" height="17.7" rx="1" fill="url(#bt)" stroke="#1e1e1e" stroke-width="1.6"/>
<text x="381.4" y="445.8" font-size="9.6" fill="#eaeaea" textLength="13.2" lengthAdjust="spacingAndGlyphs" stroke="#eaeaea" stroke-width="0.22">OK</text>
</g>

</svg>
</body></html>
